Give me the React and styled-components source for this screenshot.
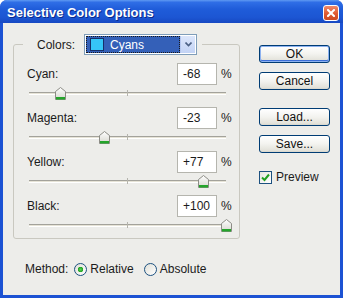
import styled, { createGlobalStyle } from "styled-components";

const GlobalStyle = createGlobalStyle`
    html, body {
        margin: 0;
        padding: 0;
        background: #ffffff;
    }
    body {
        font-family: "Liberation Sans", Arial, sans-serif;
        font-size: 12px;
        color: #1b1b1b;
    }
`;

const channels = [
    { name: "Cyan", value: -68, text: "-68" },
    { name: "Magenta", value: -23, text: "-23" },
    { name: "Yellow", value: 77, text: "+77" },
    { name: "Black", value: 100, text: "+100" },
];

const TRACK_WIDTH = 197;

function Thumb() {
    return (
        <svg width="11" height="13" viewBox="0 0 11 13">
            <defs>
                <linearGradient id="thumbFill" x1="0" y1="0" x2="0" y2="1">
                    <stop offset="0" stopColor="#ffffff" />
                    <stop offset="1" stopColor="#d6d6ce" />
                </linearGradient>
            </defs>
            <path d="M0.5 4.5 L5.5 0.5 L10.5 4.5 V12.5 H0.5 Z" fill="url(#thumbFill)" stroke="#8c8c86" />
            <rect x="1" y="10" width="9" height="2.5" fill="#24a52b" />
        </svg>
    );
}

function Slider({ value }) {
    const left = ((value + 100) / 200) * TRACK_WIDTH - 5.5;
    return (
        <SliderArea>
            <Track />
            <Tick />
            <ThumbWrap style={{ left }}>
                <Thumb />
            </ThumbWrap>
        </SliderArea>
    );
}

export default function App() {
    return (
        <>
            <GlobalStyle />
            <Window>
                <TitleBar>
                    <Title>Selective Color Options</Title>
                    <CloseButton>
                        <svg width="8" height="8" viewBox="0 0 8 8">
                            <path d="M1 1 L7 7 M7 1 L1 7" stroke="#ffffff" strokeWidth="2" strokeLinecap="square" />
                        </svg>
                    </CloseButton>
                </TitleBar>
                <Body>
                    <MainRow>
                        <Group>
                            <Legend>
                                <LegendLabel>Colors:</LegendLabel>
                                <Select>
                                    <Selected>
                                        <Swatch />
                                        <span>Cyans</span>
                                    </Selected>
                                    <ArrowButton>
                                        <svg width="7" height="5" viewBox="0 0 7 5">
                                            <path d="M0.5 0.5 L3.5 3.5 L6.5 0.5" fill="none" stroke="#4d6185" strokeWidth="1.6" />
                                        </svg>
                                    </ArrowButton>
                                </Select>
                            </Legend>
                            {channels.map((c) => (
                                <Channel key={c.name}>
                                    <ValueRow>
                                        <ChannelLabel>{c.name}:</ChannelLabel>
                                        <ValueBox>{c.text}</ValueBox>
                                        <Percent>%</Percent>
                                    </ValueRow>
                                    <Slider value={c.value} />
                                </Channel>
                            ))}
                        </Group>
                        <ButtonColumn>
                            <Button $default>OK</Button>
                            <Button>Cancel</Button>
                            <Button $spaced>Load...</Button>
                            <Button>Save...</Button>
                            <CheckRow>
                                <CheckBox>
                                    <svg width="9" height="9" viewBox="0 0 9 9">
                                        <path d="M1 4.5 L3.5 7 L8 1.5" fill="none" stroke="#21a121" strokeWidth="2" />
                                    </svg>
                                </CheckBox>
                                Preview
                            </CheckRow>
                        </ButtonColumn>
                    </MainRow>
                    <MethodRow>
                        <MethodLabel>Method:</MethodLabel>
                        <RadioOption>
                            <Radio $checked />
                            Relative
                        </RadioOption>
                        <RadioOption>
                            <Radio />
                            Absolute
                        </RadioOption>
                    </MethodRow>
                </Body>
            </Window>
        </>
    );
}

const Window = styled.div`
    width: 343px;
    height: 298px;
    box-sizing: border-box;
    display: flex;
    flex-direction: column;
    background: #1c52d3;
    border-radius: 7px 7px 0 0;
    overflow: hidden;
`;

const TitleBar = styled.div`
    height: 23px;
    flex: none;
    display: flex;
    align-items: center;
    justify-content: space-between;
    padding: 0 4px 0 7px;
    background: linear-gradient(180deg, #5f9af2 0%, #2f6ee6 10%, #1f5cd9 40%, #1c56d3 75%, #1748c2 100%);
`;

const Title = styled.div`
    color: #ffffff;
    font-family: "Liberation Sans", Arial, sans-serif;
    font-weight: bold;
    font-size: 13px;
    text-shadow: 1px 1px 0 #0a2a8c;
    margin-top: 2px;
`;

const CloseButton = styled.div`
    width: 14px;
    height: 14px;
    margin-top: 3px;
    display: flex;
    align-items: center;
    justify-content: center;
    border: 1px solid #ffffff;
    border-radius: 3px;
    background: linear-gradient(180deg, #f08a6a 0%, #df5a31 55%, #cc4a22 100%);
`;

const Body = styled.div`
    flex: 1;
    margin: 0 3px 3px 3px;
    padding: 11px 0 0 10px;
    background: #ededea;
    display: flex;
    flex-direction: column;
`;

const MainRow = styled.div`
    display: flex;
    align-items: flex-start;
    gap: 19px;
`;

const Group = styled.fieldset`
    width: 227px;
    height: 205px;
    box-sizing: border-box;
    margin: 0;
    padding: 8px 0 0 0;
    border: 1px solid #c9c8c0;
    border-radius: 3px;
`;

const Legend = styled.legend`
    display: flex;
    align-items: center;
    margin-left: 9px;
    padding: 0 5px 0 14px;
`;

const LegendLabel = styled.span`
    margin-right: 9px;
`;

const Select = styled.div`
    width: 113px;
    height: 21px;
    box-sizing: border-box;
    border: 1px solid #7f9db9;
    background: #ffffff;
    display: flex;
    padding: 1px;
`;

const Selected = styled.div`
    flex: 1;
    display: flex;
    align-items: center;
    gap: 6px;
    padding-left: 4px;
    background: #3460b8;
    color: #ffffff;
    outline: 1px dotted #1a1a1a;
    outline-offset: -1px;
`;

const Swatch = styled.div`
    width: 14px;
    height: 13px;
    box-sizing: border-box;
    border: 1px solid #16306a;
    background: #36c6f7;
`;

const ArrowButton = styled.div`
    width: 14px;
    display: flex;
    align-items: center;
    justify-content: center;
    background: linear-gradient(180deg, #dce6fb 0%, #c3d3f5 100%);
    border-left: 1px solid #b7c8ee;
`;

const Channel = styled.div`
    display: flex;
    flex-direction: column;
`;

const ValueRow = styled.div`
    display: flex;
    align-items: center;
    height: 22px;
    padding-left: 13px;
`;

const ChannelLabel = styled.span`
    flex: 1;
`;

const ValueBox = styled.div`
    width: 40px;
    height: 22px;
    box-sizing: border-box;
    border: 1px solid #b5b5ae;
    background: #ffffff;
    padding-left: 5px;
    display: flex;
    align-items: center;
`;

const Percent = styled.span`
    width: 22px;
    padding-left: 4px;
    box-sizing: border-box;
`;

const SliderArea = styled.div`
    position: relative;
    height: 22px;
    width: ${TRACK_WIDTH}px;
    margin-left: 15px;
`;

const Track = styled.div`
    position: absolute;
    left: 0;
    right: 0;
    top: 7px;
    height: 1px;
    background: #e6e3d6;
    border-top: 1px solid #a3a29b;
    border-bottom: 1px solid #ffffff;
`;

const Tick = styled.div`
    position: absolute;
    left: 98px;
    top: 5px;
    width: 1px;
    height: 6px;
    background: #b5b4ad;
`;

const ThumbWrap = styled.div`
    position: absolute;
    top: 2px;
    line-height: 0;
`;

const ButtonColumn = styled.div`
    display: flex;
    flex-direction: column;
    gap: 9px;
    padding-top: 11px;
`;

const Button = styled.div`
    width: 71px;
    height: 18px;
    box-sizing: border-box;
    display: flex;
    align-items: center;
    justify-content: center;
    border: 1px solid #003c74;
    border-radius: 3px;
    background: linear-gradient(180deg, #ffffff 0%, #f3f3ef 50%, #e3e2da 90%, #d6d5cc 100%);
    box-shadow: ${(p) => (p.$default ? "inset 0 0 0 1px #8db2f0, inset 0 -1px 0 1px #3d6fd8" : "none")};
    margin-top: ${(p) => (p.$spaced ? "9px" : "0")};
    color: #111111;
`;

const CheckRow = styled.div`
    display: flex;
    align-items: center;
    gap: 4px;
    margin-top: 8px;
`;

const CheckBox = styled.div`
    width: 13px;
    height: 13px;
    box-sizing: border-box;
    border: 1px solid #1c5180;
    background: linear-gradient(135deg, #e6e6df 0%, #ffffff 100%);
    display: flex;
    align-items: center;
    justify-content: center;
`;

const MethodRow = styled.div`
    display: flex;
    align-items: center;
    height: 16px;
    margin-top: 22px;
    padding-left: 12px;
`;

const MethodLabel = styled.span`
    margin-right: 6px;
`;

const RadioOption = styled.label`
    display: flex;
    align-items: center;
    gap: 3px;
    margin-right: 10px;
`;

const Radio = styled.span`
    width: 13px;
    height: 13px;
    box-sizing: border-box;
    border-radius: 50%;
    border: 1px solid #1c5180;
    background: ${(p) =>
        p.$checked
            ? "radial-gradient(circle, #55d35a 0, #21a121 2.5px, transparent 3px), linear-gradient(135deg, #e0e0d8, #ffffff)"
            : "linear-gradient(135deg, #e0e0d8, #ffffff)"};
`;
